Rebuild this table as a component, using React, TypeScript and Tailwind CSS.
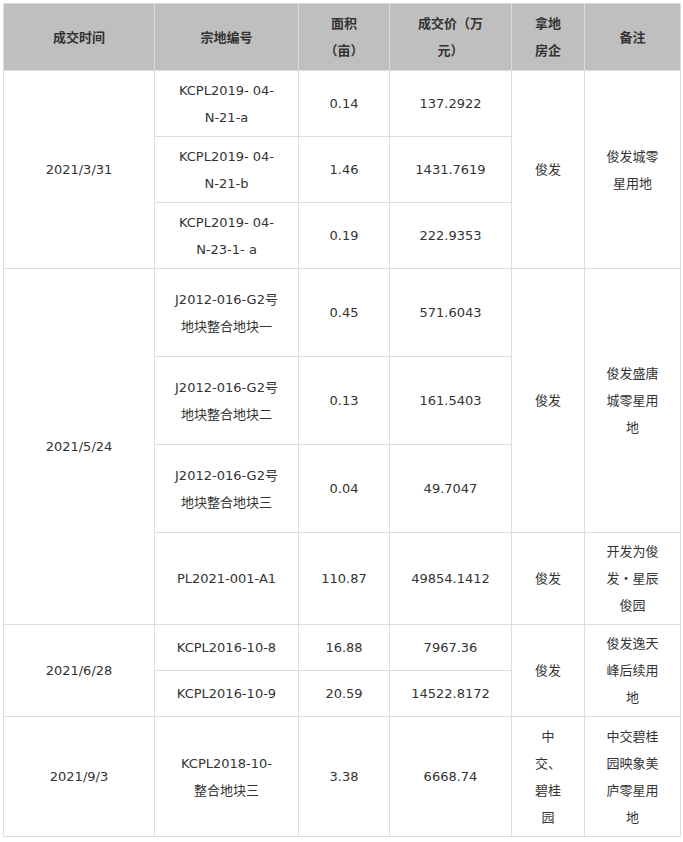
import React from 'react'

type Cell = {
  lines: string[]
  rowSpan?: number
}

type Row = {
  h: string
  cells: Cell[]
}

const td = 'border border-[#dddddd] text-center align-middle leading-[27px] px-1'

const rows: Row[] = [
  {
    h: 'h-[66px]',
    cells: [
      { lines: ['2021/3/31'], rowSpan: 3 },
      { lines: ['KCPL2019- 04-', 'N-21-a'] },
      { lines: ['0.14'] },
      { lines: ['137.2922'] },
      { lines: ['俊发'], rowSpan: 3 },
      { lines: ['俊发城零', '星用地'], rowSpan: 3 },
    ],
  },
  {
    h: 'h-[66px]',
    cells: [
      { lines: ['KCPL2019- 04-', 'N-21-b'] },
      { lines: ['1.46'] },
      { lines: ['1431.7619'] },
    ],
  },
  {
    h: 'h-[66px]',
    cells: [
      { lines: ['KCPL2019- 04-', 'N-23-1- a'] },
      { lines: ['0.19'] },
      { lines: ['222.9353'] },
    ],
  },
  {
    h: 'h-[88px]',
    cells: [
      { lines: ['2021/5/24'], rowSpan: 4 },
      { lines: ['J2012-016-G2号', '地块整合地块一'] },
      { lines: ['0.45'] },
      { lines: ['571.6043'] },
      { lines: ['俊发'], rowSpan: 3 },
      { lines: ['俊发盛唐', '城零星用', '地'], rowSpan: 3 },
    ],
  },
  {
    h: 'h-[88px]',
    cells: [
      { lines: ['J2012-016-G2号', '地块整合地块二'] },
      { lines: ['0.13'] },
      { lines: ['161.5403'] },
    ],
  },
  {
    h: 'h-[88px]',
    cells: [
      { lines: ['J2012-016-G2号', '地块整合地块三'] },
      { lines: ['0.04'] },
      { lines: ['49.7047'] },
    ],
  },
  {
    h: 'h-[92px]',
    cells: [
      { lines: ['PL2021-001-A1'] },
      { lines: ['110.87'] },
      { lines: ['49854.1412'] },
      { lines: ['俊发'] },
      { lines: ['开发为俊', '发・星辰', '俊园'] },
    ],
  },
  {
    h: 'h-[46px]',
    cells: [
      { lines: ['2021/6/28'], rowSpan: 2 },
      { lines: ['KCPL2016-10-8'] },
      { lines: ['16.88'] },
      { lines: ['7967.36'] },
      { lines: ['俊发'], rowSpan: 2 },
      { lines: ['俊发逸天', '峰后续用', '地'], rowSpan: 2 },
    ],
  },
  {
    h: 'h-[46px]',
    cells: [
      { lines: ['KCPL2016-10-9'] },
      { lines: ['20.59'] },
      { lines: ['14522.8172'] },
    ],
  },
  {
    h: 'h-[120px]',
    cells: [
      { lines: ['2021/9/3'] },
      { lines: ['KCPL2018-10-', '整合地块三'] },
      { lines: ['3.38'] },
      { lines: ['6668.74'] },
      { lines: ['中', '交、', '碧桂', '园'] },
      { lines: ['中交碧桂', '园映象美', '庐零星用', '地'] },
    ],
  },
]

const headers = [['成交时间'], ['宗地编号'], ['面积', '（亩）'], ['成交价（万', '元）'], ['拿地', '房企'], ['备注']]

function Lines({ lines }: { lines: string[] }) {
  return (
    <>
      {lines.map((l, i) => (
        <React.Fragment key={i}>
          {i > 0 && <br />}
          {l}
        </React.Fragment>
      ))}
    </>
  )
}

export default function App() {
  return (
    <div className="bg-white min-h-[842px] pt-[3px] pl-[3px] font-['DejaVu_Sans','Noto_Sans_CJK_SC',sans-serif] text-[13px] text-[#333333]">
      <table className="table-fixed border-collapse w-[677px]">
        <colgroup>
          <col className="w-[151px]" />
          <col className="w-[144px]" />
          <col className="w-[91px]" />
          <col className="w-[122px]" />
          <col className="w-[73px]" />
          <col className="w-[96px]" />
        </colgroup>
        <thead>
          <tr className="h-[67px] bg-[#bfbfbf]">
            {headers.map((h, i) => (
              <th key={i} className="border border-[#dddddd] text-center align-middle leading-[27px] font-bold px-1">
                <Lines lines={h} />
              </th>
            ))}
          </tr>
        </thead>
        <tbody>
          {rows.map((r, i) => (
            <tr key={i} className={r.h}>
              {r.cells.map((c, j) => (
                <td key={j} rowSpan={c.rowSpan} className={td}>
                  <Lines lines={c.lines} />
                </td>
              ))}
            </tr>
          ))}
        </tbody>
      </table>
    </div>
  )
}
